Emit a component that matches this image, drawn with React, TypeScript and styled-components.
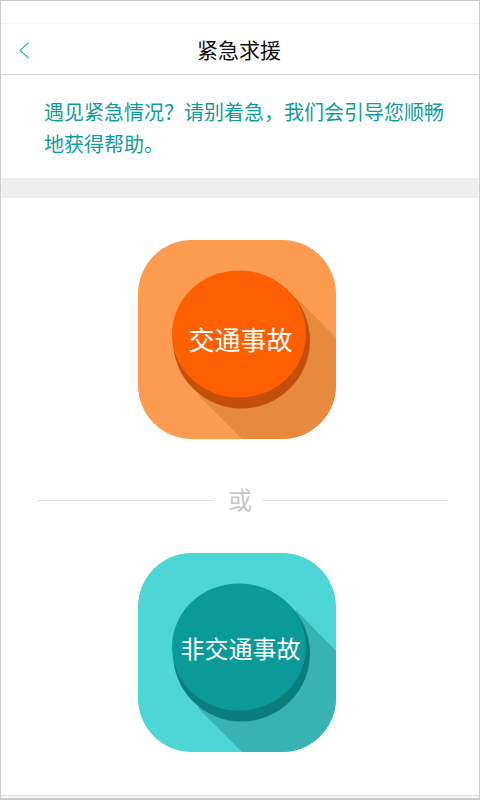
import React from "react";
import styled, { createGlobalStyle } from "styled-components";

const Global = createGlobalStyle`
  html, body { margin: 0; padding: 0; background: #fff; }
  * { box-sizing: border-box; }
`;

const FONT = `"Noto Sans CJK SC", "Noto Sans", sans-serif`;

const Page = styled.div`
  width: 480px;
  height: 800px;
  display: flex;
  flex-direction: column;
  overflow: hidden;
  background: #fff;
  border: 1px solid #cbcbcb;
  border-bottom: 0;
  font-family: ${FONT};
`;

const StatusBar = styled.div`
  height: 23px;
  flex: none;
  border-bottom: 1px solid #f3f3f3;
`;

const NavBar = styled.header`
  height: 51px;
  flex: none;
  display: flex;
  align-items: center;
  justify-content: center;
  position: relative;
  padding-right: 2px;
  border-bottom: 1px solid #d6d6d6;
`;

const BackIcon = styled.svg`
  position: absolute;
  left: 17px;
  top: 17px;
  width: 12px;
  height: 18px;
`;

const Title = styled.h1`
  margin: 0;
  font-size: 21px;
  font-weight: 400;
  line-height: 50px;
  color: #111;
`;

const Intro = styled.p`
  margin: 0;
  height: 103px;
  flex: none;
  padding: 21px 30px 0 43px;
  font-size: 20px;
  line-height: 32px;
  color: #0f9c9c;
`;

const Band = styled.div`
  height: 20px;
  flex: none;
  background: #eeeeee;
`;

const Content = styled.main`
  flex: 1;
  display: flex;
  flex-direction: column;
  align-items: center;
  padding-top: 42px;
`;

const Tile = styled.button`
  position: relative;
  width: 198px;
  height: 199px;
  flex: none;
  margin: 0 0 0 -6px;
  padding: 0;
  border: 0;
  background: none;
  cursor: pointer;
  font-family: inherit;
`;

const TileArt = styled.svg`
  display: block;
  width: 198px;
  height: 199px;
`;

const TileLabel = styled.span<{ $size: number; $top: number }>`
  position: absolute;
  left: 35.5px;
  top: ${(p) => p.$top}px;
  width: 134px;
  text-align: center;
  white-space: nowrap;
  color: #fff;
  font-size: ${(p) => p.$size}px;
  line-height: 40px;
`;

const Divider = styled.div`
  width: 411px;
  height: 114px;
  flex: none;
  margin-left: 5px;
  display: flex;
  align-items: center;
  gap: 14px;
  padding-top: 8px;
`;

const Rule = styled.span<{ $width: number }>`
  width: ${(p) => p.$width}px;
  height: 1px;
  background: #e3e3e3;
`;

const Or = styled.span`
  font-size: 24px;
  line-height: 30px;
  color: #c6c6c6;
  margin: -2px -4px 0 0;
`;

const Footer = styled.div`
  height: 5px;
  flex: none;
  border-top: 1px solid #dcdcdc;
  border-bottom: 2px solid #cbcbcb;
  background: #f6f6f6;
`;

type Palette = { tile: string; long: string; side: string; face: string };

const orange: Palette = { tile: "#fd9c50", long: "#e78a3e", side: "#c44f0b", face: "#ff5f00" };
const teal: Palette = { tile: "#4dd6d6", long: "#38b2b2", side: "#0a7e7e", face: "#0a9a9a" };

function ButtonArt({ c, id }: { c: Palette; id: string }) {
  return (
    <TileArt viewBox="0 0 198 199" aria-hidden="true">
      <defs>
        <clipPath id={id}>
          <rect width="198" height="199" rx="54" ry="54" />
        </clipPath>
      </defs>
      <g clipPath={`url(#${id})`}>
        <rect width="198" height="199" fill={c.tile} />
        <polygon points="158,57 198,98 198,199 104,199 60,155" fill={c.long} />
      </g>
      <ellipse cx="103.5" cy="100.5" rx="68.5" ry="68" fill={c.side} />
      <ellipse cx="101" cy="94" rx="67" ry="63.5" fill={c.face} />
    </TileArt>
  );
}

const introText = "遇见紧急情况\uFF1F请别着急\uFF0C我们会引导您顺畅地获得帮助。";

export default function App() {
  return (
    <>
      <Global />
      <Page>
        <StatusBar />
        <NavBar>
          <BackIcon viewBox="0 0 12 18" aria-hidden="true">
            <path d="M10.5 1.5 L2 9.5 L10.5 17" fill="none" stroke="#2fb5b0" strokeWidth="1.1" />
          </BackIcon>
          <Title>紧急求援</Title>
        </NavBar>
        <Intro>{introText}</Intro>
        <Band />
        <Content>
          <Tile>
            <ButtonArt c={orange} id="clip-orange" />
            <TileLabel $size={26} $top={79}>交通事故</TileLabel>
          </Tile>
          <Divider>
            <Rule $width={177} />
            <Or>或</Or>
            <Rule $width={186} />
          </Divider>
          <Tile>
            <ButtonArt c={teal} id="clip-teal" />
            <TileLabel $size={24} $top={75}>非交通事故</TileLabel>
          </Tile>
        </Content>
        <Footer />
      </Page>
    </>
  );
}
